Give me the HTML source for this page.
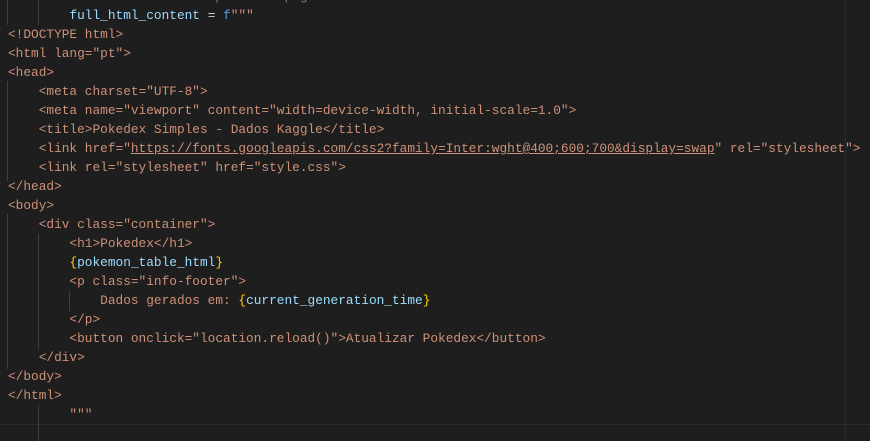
<!DOCTYPE html>
<html><head><meta charset="utf-8"><style>
html,body{margin:0;padding:0;background:#1e1e1e;width:870px;height:441px;overflow:hidden;position:relative}
.c{position:absolute;left:8px;top:-13px;font-family:"Liberation Mono",monospace;font-size:12.8px;color:#ce9178}
.l{height:19px;line-height:19px;white-space:pre}
.g{color:#6a9955}.v{color:#9cdcfe}.k{color:#569cd6}.y{color:#ffd700}.w{color:#d4d4d4}
.u{text-decoration:underline}
.guide{position:absolute;width:1px;background:#404040}
.cur{position:absolute;left:0;top:424px;width:870px;height:17px;border-top:1px solid #2c2c2c}
.ruler{position:absolute;left:845px;top:0;width:1px;height:441px;background:#2a2a2a}
</style></head><body>
<div class="ruler"></div>
<div class="cur"></div>
<div class="guide" style="left:7px;top:0;height:25px"></div>
<div class="guide" style="left:38px;top:0;height:25px"></div>
<div class="guide" style="left:7px;top:81px;height:100px"></div>
<div class="guide" style="left:7px;top:214px;height:155px"></div>
<div class="guide" style="left:38px;top:234px;height:115px"></div>
<div class="guide" style="left:69px;top:291px;height:20px"></div>
<div class="guide" style="left:38px;top:405px;height:36px"></div>
<div class="c"><div class="l g">        # Conteúdo HTML completo da página</div><div class="l">        <span class="v">full_html_content</span> <span class="w">=</span> <span class="k">f</span>"""</div><div class="l">&lt;!DOCTYPE html&gt;</div><div class="l">&lt;html lang="pt"&gt;</div><div class="l">&lt;head&gt;</div><div class="l">    &lt;meta charset="UTF-8"&gt;</div><div class="l">    &lt;meta name="viewport" content="width=device-width, initial-scale=1.0"&gt;</div><div class="l">    &lt;title&gt;Pokedex Simples - Dados Kaggle&lt;/title&gt;</div><div class="l">    &lt;link href="<span class="u">https://fonts.googleapis.com/css2?family=Inter:wght@400;600;700&amp;display=swap</span>" rel="stylesheet"&gt;</div><div class="l">    &lt;link rel="stylesheet" href="style.css"&gt;</div><div class="l">&lt;/head&gt;</div><div class="l">&lt;body&gt;</div><div class="l">    &lt;div class="container"&gt;</div><div class="l">        &lt;h1&gt;Pokedex&lt;/h1&gt;</div><div class="l">        <span class="y">{</span><span class="v">pokemon_table_html</span><span class="y">}</span></div><div class="l">        &lt;p class="info-footer"&gt;</div><div class="l">            Dados gerados em: <span class="y">{</span><span class="v">current_generation_time</span><span class="y">}</span></div><div class="l">        &lt;/p&gt;</div><div class="l">        &lt;button onclick="location.reload()"&gt;Atualizar Pokedex&lt;/button&gt;</div><div class="l">    &lt;/div&gt;</div><div class="l">&lt;/body&gt;</div><div class="l">&lt;/html&gt;</div><div class="l">        """</div><div class="l"> </div></div>
</body></html>
